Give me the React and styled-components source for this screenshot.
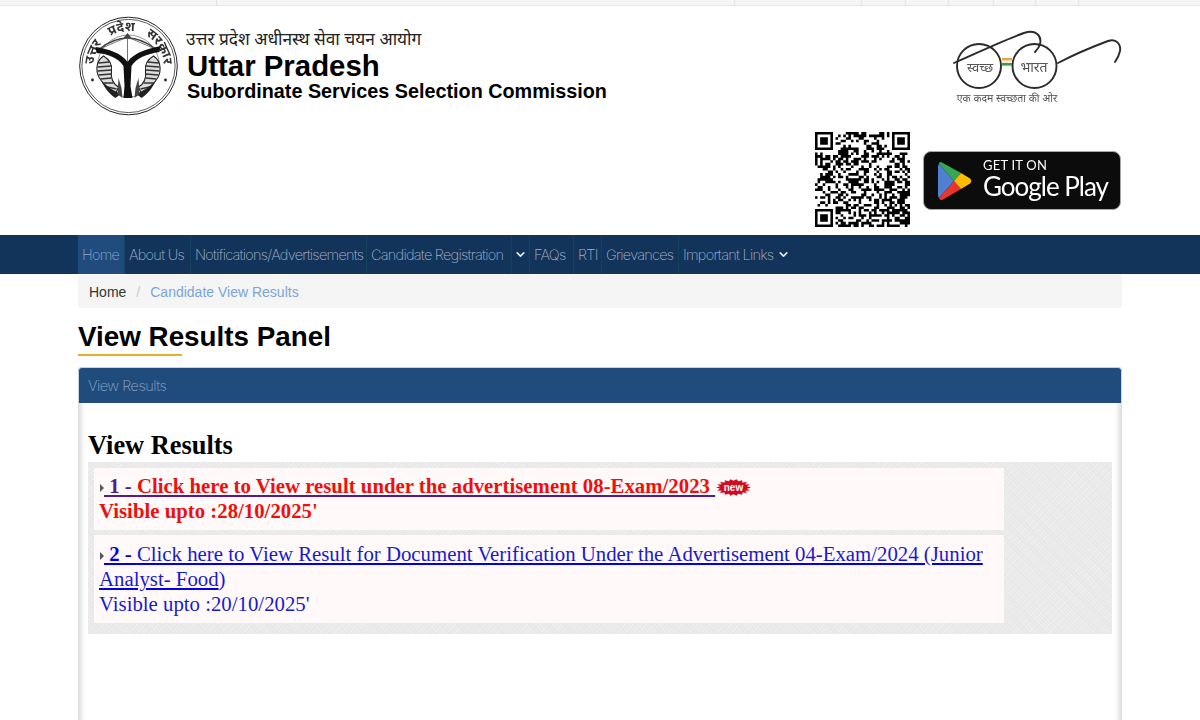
import styled, { createGlobalStyle } from "styled-components";
import { ChevronDown } from "lucide-react";

const Global = createGlobalStyle`
  html, body {
    margin: 0;
    height: 720px;
    overflow: hidden;
    background: #fff;
    font-family: "Liberation Sans", Arial, sans-serif;
  }
`;

const TopBar = styled.div`
  height: 5px;
  background: #f5f5f5;
  border-bottom: 1px solid #e6e6e6;
  display: flex;
`;

const TopCell = styled.span`
  width: ${(p) => p.$w}px;
  border-right: 1px solid #e2e2e2;
`;

const Container = styled.div`
  width: 1044px;
  margin: 0 auto;
`;

const Masthead = styled.header`
  height: 229px;
  box-sizing: border-box;
  padding-top: 10px;
`;

const BrandRow = styled.div`
  display: flex;
  justify-content: space-between;
  height: 116px;
`;

const Brand = styled.div`
  display: flex;
  gap: 7px;
`;

const BrandText = styled.div`
  padding-top: 14px;
  color: #000;
`;

const HindiName = styled.div`
  font-family: "Noto Sans Devanagari", "Noto Sans", "Noto Sans CJK SC", sans-serif;
  font-size: 17.3px;
  line-height: 22px;
  color: #222;
`;

const OrgName = styled.div`
  font-size: 29.4px;
  font-weight: 700;
  line-height: 30px;
  margin: -1px 0 0 1px;
`;

const OrgSub = styled.div`
  font-size: 19.8px;
  font-weight: 700;
  line-height: 24px;
  margin: -2px 0 0 1px;
`;

const Picture = styled.svg`
  filter: blur(0.4px);
  flex: none;
  margin-top: ${(p) => p.$top || 0}px;
`;

const AppRow = styled.div`
  display: flex;
  justify-content: flex-end;
  align-items: center;
  gap: 13px;
  padding-right: 1px;
`;

const PlayBadge = styled.div`
  width: 198px;
  height: 59px;
  margin-top: 2px;
  box-sizing: border-box;
  background: #0c0c0c;
  border: 1px solid #a6a6a6;
  border-radius: 8px;
  display: flex;
  align-items: center;
  gap: 11px;
  padding-left: 13px;
  color: #fff;
  font-family: Lato, sans-serif;
  filter: blur(0.3px);
`;

const PlayText = styled.div`
  display: flex;
  flex-direction: column;
  margin-top: -4px;
`;

const PlaySmall = styled.span`
  font-size: 13px;
  line-height: 14px;
  letter-spacing: 0.2px;
`;

const PlayBig = styled.span`
  font-size: 26px;
  line-height: 28px;
  letter-spacing: -1px;
`;

const NavBar = styled.nav`
  background: #12345b;
  height: 39px;
`;

const NavList = styled(Container)`
  display: flex;
  height: 39px;
`;

const NavItem = styled.a`
  display: flex;
  align-items: center;
  justify-content: ${(p) => (p.$icon ? "center" : "flex-start")};
  gap: 4px;
  box-sizing: border-box;
  width: ${(p) => p.$w}px;
  padding-left: ${(p) => (p.$icon ? 0 : 4)}px;
  border-right: 1px solid #16435c;
  background: ${(p) => (p.$active ? "#1f4b7d" : "transparent")};
  color: ${(p) => (p.$active ? "#8fa9c6" : "#a5b3c4")};
  font-family: Inter, sans-serif;
  font-weight: 200;
  font-size: 14.5px;
  letter-spacing: -0.74px;
  white-space: nowrap;
  ${(p) => p.$last && "border-right: 0;"}
`;

const Crumbs = styled.div`
  height: 33px;
  margin-top: 1px;
  background: #f5f5f5;
  border-radius: 0 0 4px 4px;
  display: flex;
  align-items: center;
  padding-left: 11px;
  font-size: 14px;
`;

const CrumbHome = styled.span`
  color: #333;
`;

const CrumbSep = styled.span`
  color: #ccc;
  padding: 0 10px;
`;

const CrumbLink = styled.span`
  color: #7ba4d8;
`;

const PageTitle = styled.h1`
  margin: 12px 0 0;
  font-size: 27.8px;
  line-height: 34px;
  font-weight: 700;
  color: #000;
  &::after {
    content: "";
    display: block;
    width: 104px;
    height: 2px;
    background: #efa92b;
  }
`;

const Panel = styled.section`
  margin-top: 11px;
  border-radius: 4px 4px 0 0;
  box-shadow: inset 6px 0 5px -3px #d8d8d8, inset -6px 0 5px -3px #d8d8d8;
  height: 420px;
`;

const PanelHead = styled.div`
  height: 36px;
  box-sizing: border-box;
  background: #1f4b7d;
  border: 1px solid #c9d3de;
  border-bottom: 0;
  border-radius: 4px 4px 0 0;
  display: flex;
  align-items: center;
  padding-left: 9px;
  color: #8fa9c6;
  font-family: Inter, sans-serif;
  font-weight: 200;
  font-size: 14.5px;
  letter-spacing: -0.5px;
`;

const PanelBody = styled.div`
  padding: 28px 10px 0;
  font-family: "Liberation Serif", "Times New Roman", serif;
`;

const SectionTitle = styled.h2`
  margin: 0 0 2px;
  font-size: 26.4px;
  line-height: 29px;
  font-weight: 700;
  color: #000;
`;

const ResultWrap = styled.div`
  background-color: #ebebeb;
  background-image: repeating-linear-gradient(45deg, #e7e7e7 0 1px, transparent 1px 3px),
    repeating-linear-gradient(-45deg, #efefef 0 1px, transparent 1px 5px);
  padding: 6px 108px 11px 6px;
  display: flex;
  flex-direction: column;
  gap: 5px;
`;

const ResultCard = styled.div`
  background: #fff9f9;
  padding: ${(p) => (p.$hot ? 5 : 6)}px 5px 7px;
  font-size: 20.8px;
  line-height: 25px;
  color: ${(p) => (p.$hot ? "#ee0f0f" : "#1a1acc")};
  font-weight: ${(p) => (p.$hot ? 700 : 400)};
`;

const Bullet = styled.i`
  display: inline-block;
  width: 0;
  height: 0;
  border-left: 4.5px solid #555;
  border-top: 4px solid transparent;
  border-bottom: 4px solid transparent;
  margin-left: 1px;
  vertical-align: 1px;
`;

const ResultLink = styled.a`
  color: inherit;
  text-decoration: underline;
  text-decoration-color: ${(p) => (p.$hot ? "#551a8b" : "#0000ee")};
`;

const ResultNo = styled.b`
  color: ${(p) => (p.$hot ? "#551a8b" : "#0000ee")};
`;

const NewTag = styled.svg`
  width: 35px;
  height: 17px;
  margin: -6px 0 -6px 1px;
  vertical-align: 3px;
`;

/* crest of the commission */
const Fish = () => (
  <>
    <path
      d="M25 40 C16 46 17 58 23 65 C27 70 32 74 37 78 L40 71 C35 68 32 62 33 55 C34 48 30 43 25 40 Z"
      fill="#ddd"
      stroke="#222"
      strokeWidth="1.1"
    />
    <path
      d="M20 47 L31 46 M19 51 L33 50 M19 55 L33 54 M20 59 L33 58 M22 63 L33 62 M25 67 L35 67 M29 71 L38 73"
      stroke="#333"
      strokeWidth="1.3"
    />
    <path d="M23 65 C26 72 31 78 37 82 L42 78 C36 75 29 71 23 65 Z" fill="#222" />
    <path d="M40 62 L43 72 L44 82 L39 78 Z" fill="#444" />
  </>
);

const Emblem = () => (
  <Picture width="101" height="100" viewBox="0 0 100 100" aria-label="crest">
    <defs>
      <path id="crestArc" d="M19.7 67.5 A35 35 0 1 1 80.3 67.5" />
    </defs>
    <circle cx="50" cy="50" r="48.8" fill="#fff" stroke="#222" strokeWidth="1" />
    <circle cx="50" cy="50" r="46.6" fill="none" stroke="#333" strokeWidth="0.8" />
    <circle cx="50" cy="50" r="31" fill="none" stroke="#555" strokeWidth="0.6" />
    <text fontFamily="'Noto Sans Devanagari','Noto Sans',sans-serif" fontSize="13" fontWeight="700" fill="#333" wordSpacing="8">
      <textPath href="#crestArc" startOffset="50%" textAnchor="middle">
        उत्तर प्रदेश सरकार
      </textPath>
    </text>
    <path d="M21 33 Q49 11 77 33" fill="none" stroke="#444" strokeWidth="1.4" />
    <path d="M21 33 L49 21 L77 33 M49 18 V46" fill="none" stroke="#555" strokeWidth="0.8" />
    <path d="M45 22 L49 17 L53 22 Z" fill="#444" />
    <Fish />
    <g transform="translate(100 0) scale(-1 1)">
      <Fish />
    </g>
    <path d="M17 31 C30 33 43 37 49 46 C55 37 68 33 82 30 L81 36 C68 38 58 42 53 50 L52 70 L54 82 H45 L46 70 L45 50 C40 42 30 38 18 37 Z" fill="#111" />
    <circle cx="14" cy="64" r="1.4" fill="#222" />
    <circle cx="87" cy="64" r="1.4" fill="#222" />
  </Picture>
);

const Glasses = () => (
  <Picture $top={8} width="172" height="85" viewBox="950 24 172 85" aria-label="Swachh Bharat">
    <g fill="none" stroke="#2b2b2b" strokeWidth="1.9" strokeLinecap="round">
      <circle cx="979" cy="66" r="22" />
      <circle cx="1034.5" cy="66" r="22" />
      <path d="M954 63 C975 54 1004 40 1024 33 C1036 29 1042 36 1040 44 C1039 48 1037 50 1035 52" />
      <path d="M1058 63 C1075 54 1092 47 1108 41 C1117 38 1121 45 1120 51 C1119 56 1117 59 1115 62" />
    </g>
    <rect x="1002" y="58" width="10" height="2.6" fill="#f0a23a" />
    <rect x="1002" y="60.6" width="10" height="2.4" fill="#f4f0dc" />
    <rect x="1002" y="63" width="10" height="2.6" fill="#3d9a45" />
    <g fontFamily="'Noto Sans Devanagari','Noto Sans',sans-serif" fill="#555" textAnchor="middle">
      <text x="980" y="72" fontSize="13">स्वच्छ</text>
      <text x="1034" y="72" fontSize="14">भारत</text>
      <text x="1007" y="102" fontSize="10.5">एक कदम स्वच्छता की ओर</text>
    </g>
  </Picture>
);

// stand-in matrix, same module count as the printed code
const qrPath = () => {
  const n = 37;
  let seed = 20251028;
  const rnd = () => {
    seed = (seed * 1103515245 + 12345) & 0x7fffffff;
    return (seed >> 16) & 1;
  };
  const inFinder = (x, y) =>
    (x < 8 && y < 8) || (x >= n - 8 && y < 8) || (x < 8 && y >= n - 8);
  let d = "";
  for (let y = 0; y < n; y++) {
    for (let x = 0; x < n; x++) {
      if (!inFinder(x, y) && rnd()) d += `M${x} ${y}h1v1h-1z`;
    }
  }
  [
    [0, 0],
    [n - 7, 0],
    [0, n - 7],
  ].forEach(([x, y]) => {
    d += `M${x} ${y}h7v7h-7zM${x + 1} ${y + 1}v5h5v-5zM${x + 2} ${y + 2}h3v3h-3z`;
  });
  return d;
};

const QrCode = () => (
  <Picture width="95" height="95" viewBox="0 0 37 37" aria-label="QR code">
    <path d={qrPath()} fill="#000" fillRule="evenodd" />
  </Picture>
);

const PlayIcon = () => (
  <svg width="35" height="40" viewBox="0 0 35 40">
    <path d="M2 3 Q2 0 5 1.5 L24 12 L17 20 Z" fill="#34a853" />
    <path d="M2 3 L17 20 L2 37 Q1 36 1 34 V6 Q1 4 2 3 Z" fill="#4f7fd0" />
    <path d="M2 37 Q3 40 6 38.5 L24 28 L17 20 Z" fill="#e8362e" />
    <path d="M24 12 L33 17.5 Q35.5 20 33 22.5 L24 28 L17 20 Z" fill="#fbbc04" />
  </svg>
);

const NewBurst = () => {
  const pts = [];
  for (let i = 0; i < 36; i++) {
    const a = (i / 36) * Math.PI * 2;
    const k = i % 2 ? 0.78 : 1;
    pts.push(`${17.5 + 17.5 * k * Math.cos(a)},${8.5 + 8.5 * k * Math.sin(a)}`);
  }
  return (
    <NewTag viewBox="0 0 35 17">
      <polygon points={pts.join(" ")} fill="#d20c1e" />
      <text x="17.5" y="11.5" textAnchor="middle" fontFamily="Liberation Sans, sans-serif" fontSize="10" fontWeight="700" fill="#fff">
        new
      </text>
    </NewTag>
  );
};

const navItems = [
  { label: "Home", w: 47, active: true },
  { label: "About Us", w: 66 },
  { label: "Notifications/Advertisements", w: 176 },
  { label: "Candidate Registration", w: 145 },
  { w: 18, chevron: true },
  { label: "FAQs", w: 44 },
  { label: "RTI", w: 28 },
  { label: "Grievances", w: 77 },
  { label: "Important Links", w: 120, chevron: true, last: true },
];

const topCells = [217, 518, 127, 44, 43, 45, 42, 43];

export default function App() {
  return (
    <>
      <Global />
      <TopBar>
        {topCells.map((w, i) => (
          <TopCell key={i} $w={w - 1} />
        ))}
      </TopBar>
      <Container>
        <Masthead>
          <BrandRow>
            <Brand>
              <Emblem />
              <BrandText>
                <HindiName>उत्तर प्रदेश अधीनस्थ सेवा चयन आयोग</HindiName>
                <OrgName>Uttar Pradesh</OrgName>
                <OrgSub>Subordinate Services Selection Commission</OrgSub>
              </BrandText>
            </Brand>
            <Glasses />
          </BrandRow>
          <AppRow>
            <QrCode />
            <PlayBadge>
              <PlayIcon />
              <PlayText>
                <PlaySmall>GET IT ON</PlaySmall>
                <PlayBig>Google Play</PlayBig>
              </PlayText>
            </PlayBadge>
          </AppRow>
        </Masthead>
      </Container>
      <NavBar>
        <NavList>
          {navItems.map((item, i) => (
            <NavItem key={i} $w={item.w} $active={item.active} $last={item.last} $icon={!item.label}>
              {item.label}
              {item.chevron && <ChevronDown size={13} strokeWidth={3} color="#e4e9ef" />}
            </NavItem>
          ))}
        </NavList>
      </NavBar>
      <Container>
        <Crumbs>
          <CrumbHome>Home</CrumbHome>
          <CrumbSep>/</CrumbSep>
          <CrumbLink>Candidate View Results</CrumbLink>
        </Crumbs>
        <PageTitle>View Results Panel</PageTitle>
        <Panel>
          <PanelHead>View Results</PanelHead>
          <PanelBody>
            <SectionTitle>View Results</SectionTitle>
            <ResultWrap>
              <ResultCard $hot>
                <Bullet />
                <ResultLink $hot>
                  <ResultNo $hot>&nbsp;1 - </ResultNo>Click here to View result under the advertisement 08-Exam/2023{" "}
                </ResultLink>
                <NewBurst />
                <br />
                Visible upto :28/10/2025'
              </ResultCard>
              <ResultCard>
                <Bullet />
                <ResultLink>
                  <ResultNo>&nbsp;2 - </ResultNo>Click here to View Result for Document Verification Under the Advertisement
                  04-Exam/2024 (Junior Analyst- Food
                </ResultLink>
                )
                <br />
                Visible upto :20/10/2025'
              </ResultCard>
            </ResultWrap>
          </PanelBody>
        </Panel>
      </Container>
    </>
  );
}
